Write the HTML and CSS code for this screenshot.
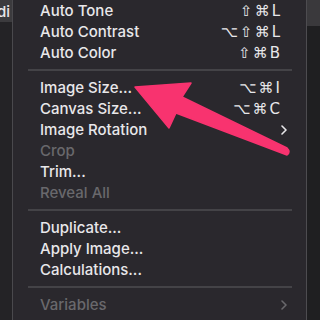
FILE: index.html
```html
<!DOCTYPE html>
<html lang="en">
<head>
    <meta charset="UTF-8">
    <title>Image menu</title>
    <link rel="stylesheet" href="styles.css">
</head>
<body>
    <!-- Left edge of the app window -->
    <div class="side side-left">
        <div class="side-bar"><span>Edi</span></div>
    </div>

    <!-- Image menu -->
    <div class="menu">
        <div class="item"><span>Auto Tone</span><span class="keys">⇧⌘L</span></div>
        <div class="item"><span>Auto Contrast</span><span class="keys">⌥⇧⌘L</span></div>
        <div class="item"><span>Auto Color</span><span class="keys">⇧⌘B</span></div>
        <div class="sep"></div>
        <div class="item"><span>Image Size...</span><span class="keys">⌥⌘I</span></div>
        <div class="item"><span>Canvas Size...</span><span class="keys">⌥⌘C</span></div>
        <div class="item"><span>Image Rotation</span>
            <svg class="chev" width="6" height="10" viewBox="0 0 6 10"><path d="M1 1 L5 5 L1 9" fill="none" stroke="currentColor" stroke-width="1.6" stroke-linecap="round" stroke-linejoin="round"/></svg>
        </div>
        <div class="item off"><span>Crop</span></div>
        <div class="item"><span>Trim...</span></div>
        <div class="item off"><span>Reveal All</span></div>
        <div class="sep"></div>
        <div class="item"><span>Duplicate...</span></div>
        <div class="item"><span>Apply Image...</span></div>
        <div class="item"><span>Calculations...</span></div>
        <div class="sep"></div>
        <div class="item off"><span>Variables</span>
            <svg class="chev" width="6" height="10" viewBox="0 0 6 10"><path d="M1 1 L5 5 L1 9" fill="none" stroke="currentColor" stroke-width="1.6" stroke-linecap="round" stroke-linejoin="round"/></svg>
        </div>
        <div class="item off"><span>Apply Data Set...</span></div>
    </div>

    <!-- Right edge of the app window -->
    <div class="side side-right">
        <div class="side-bar"></div>
    </div>

    <!-- Annotation arrow -->
    <svg class="arrow" width="320" height="320" viewBox="0 0 320 320">
        <path d="M135 87 L191 83 L182 97 L287 148 Q291 152 287 155 L176 113 L169 128 Z" fill="#f8336f" stroke="#f8336f" stroke-width="1.5" stroke-linejoin="round"/>
    </svg>
</body>
</html>
```

FILE: styles.css
```css
/* Base */
body {
    margin: 0;
    width: 320px;
    height: 320px;
    overflow: hidden;
    display: flex;
    background-color: #232225;
    font-family: Inter, 'Liberation Sans', sans-serif;
    font-weight: 500;
    color: #e8e7ea;
    position: relative;
}

/* Window edges */
.side {
    display: flex;
    flex-direction: column;
    background-color: #242326;
}
.side-left {
    width: 12px;
}
.side-right {
    flex: 1;
    background-color: #1f1f21;
}
.side-bar {
    height: 22px;
    background-color: #3c3b3e;
    display: flex;
    justify-content: flex-end;
    align-items: center;
    overflow: hidden;
    font-size: 15px;
    padding-right: 2px;
}
.side-right .side-bar {
    height: 26px;
    background-color: #3a393c;
}

/* Menu */
.menu {
    width: 293px;
    border-left: 1px solid #4a494d;
    border-right: 1px solid #4d4c50;
    background-color: #2a282d;
    display: flex;
    flex-direction: column;
    font-size: 15px;
}
.item {
    height: 21px;
    flex-shrink: 0;
    display: flex;
    align-items: center;
    justify-content: space-between;
    padding: 0 26px 0 27px;
}
.item.off {
    color: #69686c;
}
.keys {
    font-family: 'DejaVu Sans', sans-serif;
    font-weight: normal;
    font-size: 15px;
    letter-spacing: 2px;
    margin-right: -2px;
}
.chev {
    margin-right: -7px;
}
.sep {
    height: 14px;
    flex-shrink: 0;
    display: flex;
    align-items: center;
    padding: 0 14px 0 15px;
}
.sep::before {
    content: "";
    flex: 1;
    height: 2px;
    background-color: #444347;
}

/* Arrow */
.arrow {
    position: absolute;
    left: 0;
    top: 0;
}
```
